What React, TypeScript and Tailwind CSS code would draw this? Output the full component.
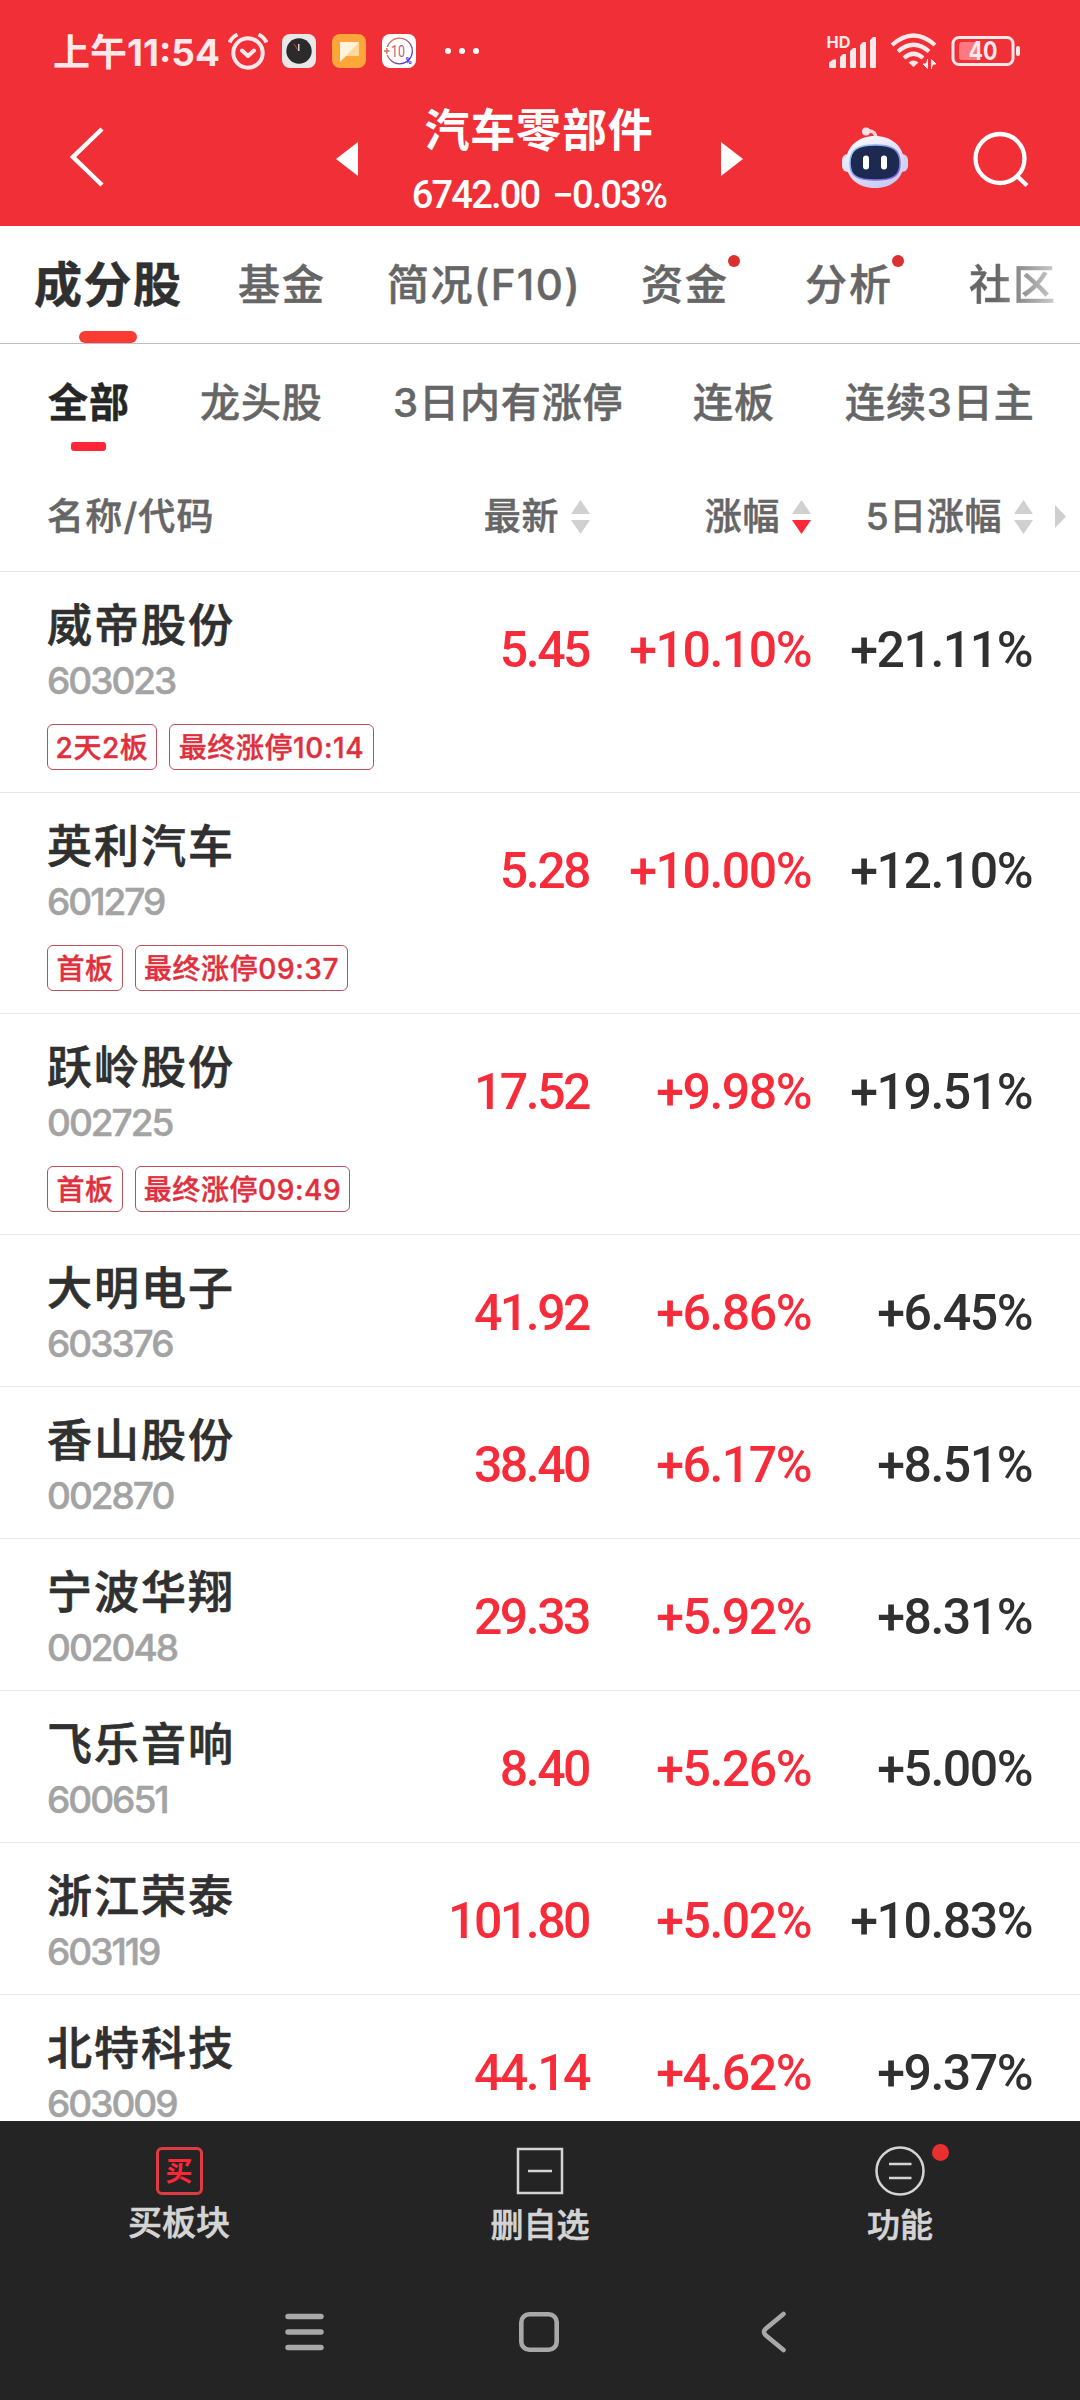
import { clsx } from "clsx";

type Stock = {
  name: string;
  code: string;
  price: string;
  change: string;
  fiveDay: string;
  tags?: { text: string; width: string }[];
};

const stocks: Stock[] = [
  {
    name: "威帝股份", code: "603023", price: "5.45", change: "+10.10%", fiveDay: "+21.11%",
    tags: [{ text: "2天2板", width: "w-[110px]" }, { text: "最终涨停10:14", width: "w-[205px]" }],
  },
  {
    name: "英利汽车", code: "601279", price: "5.28", change: "+10.00%", fiveDay: "+12.10%",
    tags: [{ text: "首板", width: "w-[76px]" }, { text: "最终涨停09:37", width: "w-[213px]" }],
  },
  {
    name: "跃岭股份", code: "002725", price: "17.52", change: "+9.98%", fiveDay: "+19.51%",
    tags: [{ text: "首板", width: "w-[76px]" }, { text: "最终涨停09:49", width: "w-[215px]" }],
  },
  { name: "大明电子", code: "603376", price: "41.92", change: "+6.86%", fiveDay: "+6.45%" },
  { name: "香山股份", code: "002870", price: "38.40", change: "+6.17%", fiveDay: "+8.51%" },
  { name: "宁波华翔", code: "002048", price: "29.33", change: "+5.92%", fiveDay: "+8.31%" },
  { name: "飞乐音响", code: "600651", price: "8.40", change: "+5.26%", fiveDay: "+5.00%" },
  { name: "浙江荣泰", code: "603119", price: "101.80", change: "+5.02%", fiveDay: "+10.83%" },
  { name: "北特科技", code: "603009", price: "44.14", change: "+4.62%", fiveDay: "+9.37%" },
];

const tabs = [
  { text: "基金", width: "w-[149px]" },
  { text: "简况(F10)", width: "w-[254px] tracking-[1.400px]" },
  { text: "资金", width: "w-[164px]", dot: true },
  { text: "分析", width: "w-[164px]", dot: true },
];

const filters = [
  { text: "龙头股", width: "w-[193px]" },
  { text: "3日内有涨停", width: "w-[300px]" },
  { text: "连板", width: "w-[152px]" },
  { text: "连续3日主", width: "w-[200px]" },
];

function StatusBar() {
  return (
    <div className="flex h-[90px] items-center pt-[12px] pl-[53px] text-[#ffe8ea]">
      <div className="w-[175px] pt-[2px] whitespace-nowrap text-[37px] leading-none font-bold">上午11:54</div>
      <svg width="40" height="38" viewBox="0 0 40 38" fill="none" stroke="currentColor" strokeWidth="4">
        <circle cx="20" cy="21" r="14.700" />
        <path d="M14 18.500l6 5.500 6-5.500" strokeLinecap="round" strokeLinejoin="round" />
        <path d="M1.500 10.500Q4 5 9.500 2.500M38.500 10.500Q36 5 30.500 2.500" />
      </svg>
      <svg className="ml-[14px]" width="34" height="34" viewBox="0 0 34 34">
        <rect width="34" height="34" rx="8" fill="#e9e7e7" />
        <circle cx="17" cy="17" r="12.700" fill="#2b2b2b" />
        <path d="M16.800 17V10" stroke="#fff" strokeWidth="1.200" />
        <path d="M16 16l-4-6" stroke="#e0483f" strokeWidth="1" />
      </svg>
      <svg className="ml-[16px]" width="34" height="34" viewBox="0 0 34 34">
        <rect width="34" height="34" rx="8" fill="#ffa63a" />
        <path d="M8 8h19v14H14l-6 6z" fill="#fff3dc" />
        <path d="M27 8v14H14z" fill="#ffd79a" />
      </svg>
      <svg className="ml-[16px]" width="34" height="34" viewBox="0 0 34 34">
        <defs>
          <linearGradient id="ten" x1="0" y1="0" x2="1" y2="1">
            <stop offset="0.300" stopColor="#dc6a55" />
            <stop offset="0.900" stopColor="#4a35d8" />
          </linearGradient>
        </defs>
        <rect width="34" height="34" rx="8" fill="#fff" />
        <circle cx="17.500" cy="17" r="12.800" fill="none" stroke="url(#ten)" strokeWidth="1.300" />
        <rect x="1" y="13" width="7" height="8" fill="#fff" />
        <path d="M2 17h5.500M4.800 14v6" stroke="#dc6a55" strokeWidth="1.300" />
        <text x="9" y="23" fontSize="17" fontFamily="Roboto" textLength="14" lengthAdjust="spacingAndGlyphs" fill="#c75a74">10</text>
        <text x="23.500" y="29.500" fontSize="8.500" fontFamily="Roboto" fontWeight="700" fill="#3328dd">%</text>
      </svg>
      <div className="ml-[29px] flex gap-2">
        <i className="size-[6px] rounded-full bg-white" />
        <i className="size-[6px] rounded-full bg-white" />
        <i className="size-[6px] rounded-full bg-white" />
      </div>
      <svg className="ml-[347px]" width="52" height="36" viewBox="0 0 52 36" fill="currentColor">
        <text x="0.500" y="14.500" fontSize="16.500" fontFamily="Inter" fontWeight="700" textLength="24" lengthAdjust="spacingAndGlyphs">HD</text>
        <path d="M3 34v-4.500l4-3h3V34q0 1-1 1H4q-1 0-1-1zM14 34V24l3-3h3v13q0 1-1 1h-4q-1 0-1-1zM24 34V18l3-3h3v19q0 1-1 1h-4q-1 0-1-1zM34 34V12l3-3h3v25q0 1-1 1h-4q-1 0-1-1zM44 34V7l3-3h3v30q0 1-1 1h-4q-1 0-1-1z" />
      </svg>
      <svg className="ml-[12px]" width="48" height="37" viewBox="0 0 48 37" fill="none" stroke="currentColor" strokeWidth="4.200">
        <path d="M2 12Q23.500-7 45 12" />
        <path d="M8 18.500Q23.500 5 39 18.500" />
        <path d="M14 25Q23.500 16.500 33 25" />
        <path d="M18.500 29.500Q23.500 25.500 28.500 29.500L23.500 34z" fill="currentColor" stroke="none" />
        <path d="M37.500 26v9.500l-4.500-4.500h3v-1M41.500 36v-9.500l4.500 4.500h-3v1" fill="currentColor" strokeWidth="1" />
      </svg>
      <svg className="ml-[13px]" width="72" height="32" viewBox="0 0 72 32">
        <rect x="2" y="2.500" width="60" height="27" rx="6" fill="none" stroke="currentColor" strokeWidth="3" />
        <path d="M11 7h17v18H11q-3 0-3-3V10q0-3 3-3z" fill="#ff7a80" />
        <rect x="65" y="11" width="4" height="10" rx="2" fill="currentColor" />
        <text x="17.500" y="25" fontSize="25.500" fontFamily="Inter" fontWeight="700" textLength="29" lengthAdjust="spacingAndGlyphs" fill="currentColor">40</text>
      </svg>
    </div>
  );
}

function Robot() {
  return (
    <svg className="ml-[99px] mt-[37px]" width="66" height="62" viewBox="0 0 66 62">
      <defs>
        <linearGradient id="shell" x1="0" y1="0" x2="0.600" y2="1">
          <stop offset="0" stopColor="#fff" />
          <stop offset="0.550" stopColor="#e4e0f8" />
          <stop offset="1" stopColor="#c9ccf2" />
        </linearGradient>
        <linearGradient id="rim" x1="0" y1="0" x2="1" y2="1">
          <stop offset="0" stopColor="#8fd6f5" />
          <stop offset="1" stopColor="#7c4fe0" />
        </linearGradient>
      </defs>
      <path d="M25 4q9-1 9 8" fill="none" stroke="#f7d5e0" strokeWidth="3.500" />
      <circle cx="24" cy="4.500" r="4" fill="#fbe0e8" />
      <rect x="0" y="27" width="12" height="18" rx="6" fill="#e9e4fa" />
      <rect x="54" y="27" width="12" height="18" rx="6" fill="#cfd0f6" />
      <path d="M33 9c16 0 29 10 29 26S50 61 33 61 4 51 4 35 17 9 33 9z" fill="url(#shell)" />
      <path d="M33 18c18 0 25 5 25 18s-7 17-25 17S8 49 8 36s7-18 25-18z" fill="#1d2950" stroke="url(#rim)" strokeWidth="1.500" />
      <rect x="21" y="28.500" width="6" height="14" rx="3" fill="#fff" />
      <rect x="39" y="28.500" width="6" height="14" rx="3" fill="#fff" />
    </svg>
  );
}

function Header() {
  return (
    <header className="h-[226px] bg-[#f12f37]">
      <StatusBar />
      <div className="flex h-[136px] items-start pl-[68px] text-white">
        <svg className="mt-[36px]" width="38" height="62" viewBox="0 0 38 62" fill="none" stroke="currentColor" strokeWidth="4.500">
          <path d="M34 3L5 31l29 28" />
        </svg>
        <svg className="ml-[230px] mt-[52px]" width="22" height="34" viewBox="0 0 22 34" fill="currentColor">
          <path d="M22 0v34L0 17z" />
        </svg>
        <div className="ml-[48px] flex w-[266px] flex-col items-center gap-1.5 pt-[12px] whitespace-nowrap">
          <h1 className="text-[45px] leading-[58px] font-bold tracking-[0.800px]">汽车零部件</h1>
          <p className="flex gap-[13px] font-[Roboto] text-[38px] leading-[58px] font-medium tracking-[-1.800px]">
            <span>6742.00</span>
            <span>−0.03%</span>
          </p>
        </div>
        <svg className="ml-[49px] mt-[52px]" width="22" height="34" viewBox="0 0 22 34" fill="currentColor">
          <path d="M0 0v34l22-17z" />
        </svg>
        <Robot />
        <svg className="ml-[64px] mt-[41px]" width="58" height="58" viewBox="0 0 58 58" fill="none" stroke="currentColor" strokeWidth="4.300">
          <circle cx="28" cy="27.500" r="24.500" />
          <path d="M45 45l10 9.500" />
        </svg>
      </div>
    </header>
  );
}

function Tabs() {
  return (
    <nav className="flex h-[118px] items-center border-b border-[#bcc0c0] pl-[35px] text-[42px] leading-[60px] font-medium tracking-[2px] whitespace-nowrap text-[#666] [-webkit-text-stroke:0.5px]">
      <div className="relative w-[203px] text-[48px] font-bold tracking-[1.500px] text-[#303030]">
        <span className="-ml-px">成分股</span>
        <span className="absolute top-[76px] left-[44px] h-[12px] w-[58px] rounded-full bg-[#fa3c32]" />
      </div>
      {tabs.map((tab) => (
        <div key={tab.text} className={clsx("relative", tab.width)}>
          {tab.text}
          {tab.dot && <span className="absolute top-0 left-[87px] size-[12px] rounded-full bg-[#dc2f2f]" />}
        </div>
      ))}
      <div className="bg-linear-to-r from-[#666] from-30% to-[#d0d0d0] bg-clip-text text-transparent">社区</div>
    </nav>
  );
}

function Filters() {
  return (
    <div className="flex h-[117px] items-center pl-[48px] text-[40px] leading-[60px] font-medium tracking-[0.900px] whitespace-nowrap text-[#666] [-webkit-text-stroke:0.5px]">
      <div className="relative w-[152px] font-bold text-[#262626]">
        全部
        <span className="absolute top-[69px] left-[23px] h-[9px] w-[35px] rounded-[3px] bg-[#ff2638]" />
      </div>
      {filters.map((f) => (
        <div key={f.text} className={f.width}>{f.text}</div>
      ))}
    </div>
  );
}

function SortArrows({ active = false }) {
  return (
    <svg className="ml-[12px]" width="19" height="34" viewBox="0 0 19 34" fill="#d0d0d0">
      <path d="M9.500 0L19 14H0z" />
      <path d="M9.500 34L19 20H0z" fill={active ? "#ff2638" : "#d0d0d0"} />
    </svg>
  );
}

function TableHead() {
  return (
    <div className="flex h-[111px] items-center border-b border-[#e6e6e6] pt-px pl-[47px] text-[37px] leading-[50px] font-medium tracking-[0.600px] whitespace-nowrap text-[#666] [-webkit-text-stroke:0.5px]">
      <div className="w-[322px] tracking-[1.200px]">名称/代码</div>
      <div className="flex w-[221px] items-center justify-end">最新<SortArrows /></div>
      <div className="flex w-[221px] items-center justify-end">涨幅<SortArrows active /></div>
      <div className="flex w-[222px] items-center justify-end">5日涨幅<SortArrows /></div>
      <svg className="ml-[22px]" width="11" height="23" viewBox="0 0 11 23" fill="#cfcfcf">
        <path d="M0 0v23l11-11.500z" />
      </svg>
    </div>
  );
}

function StockRow({ stock }: { stock: Stock }) {
  return (
    <div className={clsx("shrink-0 border-b border-[#e8e8e8]", stock.tags ? "h-[221px]" : "h-[152px]")}>
      <div className="flex h-[152px] items-start pl-[47px] whitespace-nowrap">
        <div className="w-[324px] pt-[25px] font-medium">
          <div className="text-[45px] leading-[58px] tracking-[2px] text-[#303030] [-webkit-text-stroke:0.7px]">{stock.name}</div>
          <div className="pt-[9px] text-[37px] leading-[34px] tracking-[-2px] text-[#a3a3a3] [-webkit-text-stroke:0.5px]">{stock.code}</div>
        </div>
        <div className="flex pt-[49px] text-right font-[Roboto] text-[50px] leading-[58px] font-medium tracking-[-1.500px]">
          <div className="w-[218px] tracking-[-2.500px] text-[#f72c3b]">{stock.price}</div>
          <div className="w-[222px] text-[#f72c3b]">{stock.change}</div>
          <div className="w-[221px] text-[#303030]">{stock.fiveDay}</div>
        </div>
      </div>
      {stock.tags && (
        <div className="flex gap-3 pl-[47px]">
          {stock.tags.map((tag) => (
            <span
              key={tag.text}
              className={clsx(
                "flex h-[46px] items-center justify-center rounded-[6px] border border-[#b8505a] pt-px text-[28px] leading-none font-medium tracking-[0.600px] whitespace-nowrap text-[#e0303e] [-webkit-text-stroke:0.4px]",
                tag.width
              )}
            >
              {tag.text}
            </span>
          ))}
        </div>
      )}
    </div>
  );
}

function BottomBar() {
  return (
    <footer className="h-[279px] bg-[#242424] text-[#d4d4d4]">
      <div className="grid h-[160px] grid-cols-3 pt-[26px] text-center text-[33px] leading-[46px] font-medium">
        <div className="flex flex-col items-center pr-[2px]">
          <div className="flex h-[48px] w-[47px] items-center justify-center rounded-[6px] border-3 border-[#df3b42] pt-px text-[27px] leading-none font-bold text-[#ff2638]">买</div>
          <div className="mt-[5px] text-[34px] [-webkit-text-stroke:0.6px]">买板块</div>
        </div>
        <div className="flex flex-col items-center">
          <svg width="48" height="48" viewBox="0 0 48 48" fill="none" stroke="currentColor" strokeWidth="2.500">
            <path d="M2 2h44v44H2zM12 24h24" />
          </svg>
          <div className="mt-[7px] [-webkit-text-stroke:0.6px]">删自选</div>
        </div>
        <div className="flex flex-col items-center">
          <div className="relative -mt-px">
            <svg width="52" height="50" viewBox="0 0 52 50" fill="none" stroke="currentColor" strokeWidth="2.500">
              <circle cx="26" cy="25" r="23.500" />
              <path d="M15 18h22.500M15 32h22.500" />
            </svg>
            <span className="absolute -top-[2px] left-[58px] size-[17px] rounded-full bg-[#e83030]" />
          </div>
          <div className="mt-[6px] [-webkit-text-stroke:0.6px]">功能</div>
        </div>
      </div>
      <div className="flex h-[102px] items-center pl-[285px] text-[#a8a8a8]">
        <svg width="39" height="38" viewBox="0 0 39 38" stroke="currentColor" strokeWidth="5.500" strokeLinecap="round">
          <path d="M3 3.500h33M3 19h33M3 34.500h33" />
        </svg>
        <svg className="ml-[194px]" width="42" height="42" viewBox="0 0 42 42" fill="none" stroke="currentColor" strokeWidth="4.600">
          <rect x="3.300" y="3.300" width="35.400" height="35.400" rx="8" />
        </svg>
        <svg className="ml-[201px]" width="26" height="42" viewBox="0 0 26 42" fill="none" stroke="currentColor" strokeWidth="4.600" strokeLinecap="round">
          <path d="M22.500 3L5 17.500q-4 3.500 0 7L22.500 39" />
        </svg>
      </div>
    </footer>
  );
}

export default function App() {
  return (
    <div className="flex h-[2400px] w-[1080px] flex-col overflow-hidden bg-white font-['Inter','Noto_Sans_CJK_SC',sans-serif]">
      <Header />
      <Tabs />
      <Filters />
      <TableHead />
      <main className="flex h-[1549px] flex-col overflow-hidden">
        {stocks.map((stock) => (
          <StockRow key={stock.code} stock={stock} />
        ))}
      </main>
      <BottomBar />
    </div>
  );
}
